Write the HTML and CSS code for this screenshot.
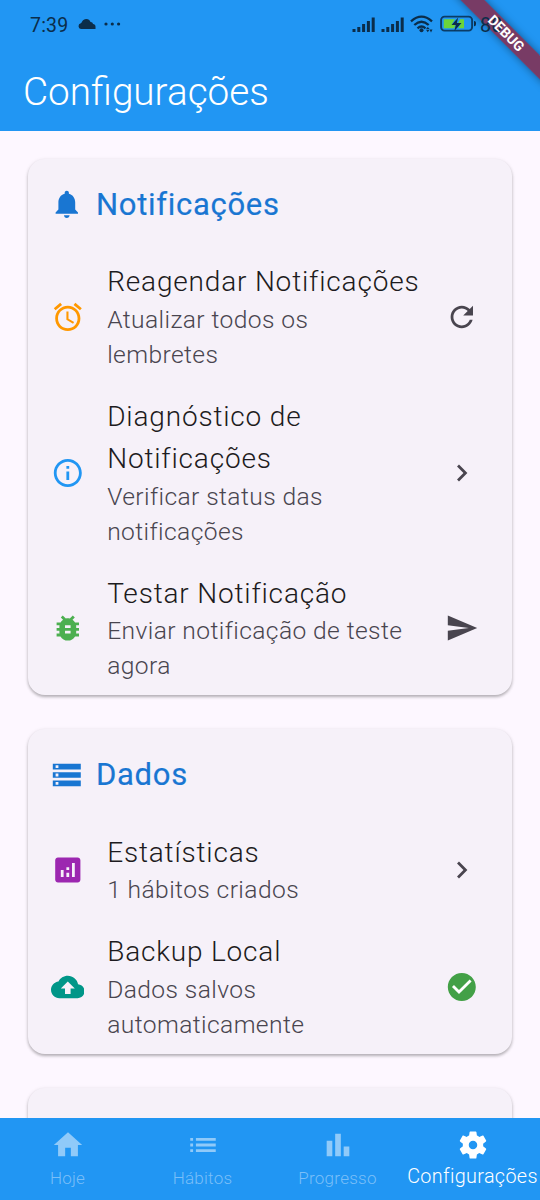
FILE: index.html
```html
<!DOCTYPE html>
<html lang="pt-BR">
<head>
<meta charset="utf-8">
<title>Configurações</title>
<link rel="stylesheet" href="styles.css">
</head>
<body>
<div class="app">
  <header class="appbar">
    <div class="debug ribbon"></div>
    <div class="status">
      <span class="clock">7:39</span>
      <svg class="cloud" width="18" height="10" viewBox="0 0 18 10"><path d="M3 10a2.900 2.900 0 0 1-.2-5.700C4 4 4.300 0 8.200 0c2.800 0 3.800 1.800 4.300 3 1.500 0 2.300.8 2.500 2 1.500 0 2.500 1 2.500 2.400V10z"/></svg>
      <svg class="dots" width="18" height="4" viewBox="0 0 18 4"><circle cx="2" cy="2" r="1.600"/><circle cx="8.300" cy="2" r="1.600"/><circle cx="14.600" cy="2" r="1.600"/></svg>
      <div class="indicators">
        <svg width="24" height="16" viewBox="0 0 24 16"><path d="M.5 13h3v3h-3zM5.300 11h3v5h-3zM10.100 8h3v8h-3zM14.900 5h3v11h-3zM19.700 1.500h3V16h-3z"/></svg>
        <svg width="24" height="16" viewBox="0 0 24 16"><path d="M.5 13h3v3h-3zM5.300 11h3v5h-3zM10.100 8h3v8h-3zM14.900 5h3v11h-3zM19.700 1.500h3V16h-3z"/></svg>
        <svg class="wifi" width="24" height="18" viewBox="0 0 24 18"><g fill="none" stroke="#0b2d4a" stroke-width="2.300"><path d="M1 6.300Q11.500-3 22 6.300"/><path d="M4.300 10Q11.500 3.500 18.700 10"/><path d="M7.500 13.300Q11.500 9.800 15.500 13.300"/></g><circle cx="11.500" cy="15.300" r="2"/><path d="M16 14l1.800-2 1.800 2zM16 14.800h3.500l-1.700 2.500zM19.500 14.500h3l-1.500 3z"/></svg>
        <svg class="battery" width="37" height="18" viewBox="0 0 37 18"><rect x="1.100" y="1.600" width="31" height="14" rx="3.500" fill="none" stroke="#0b3c66" stroke-width="1.900"/><path class="charge" d="M3.800 4.200H15L12 9h4l-2 4.200H3.800zM20 4.200h4v9h-6l3-5h-3z"/><path d="M18.200 2.500L11.500 10h4.300l-1.500 6L21.500 8h-4.700zM34 6c1.800 0 2 1 2 2.500S35.800 11.200 34 11.200z"/></svg>
        <span class="level">80</span>
      </div>
    </div>
    <h1 class="title">Configurações</h1>
    <div class="debug">DEBUG</div>
  </header>

  <main class="content">
    <section class="card">
      <h2 class="card-head blue"><svg class="icon" viewBox="0 0 24 24"><path d="M12 22c1.100 0 2-.9 2-2h-4c0 1.100.89 2 2 2zm6-6v-5c0-3.070-1.640-5.640-4.500-6.320V4c0-.83-.67-1.500-1.500-1.500s-1.500.67-1.500 1.500v.68C7.630 5.360 6 7.920 6 11v5l-2 2v1h16v-1l-2-2z"/></svg><span>Notificações</span></h2>
      <div class="row">
        <svg class="icon orange" viewBox="0 0 24 24"><path d="M22 5.720l-4.600-3.860-1.290 1.530 4.600 3.860L22 5.720zM7.880 3.390L6.600 1.860 2 5.710l1.290 1.530 4.590-3.850zM12.500 8H11v6l4.750 2.850.75-1.230-4-2.370V8zM12 4c-4.970 0-9 4.030-9 9s4.020 9 9 9c4.970 0 9-4.030 9-9s-4.030-9-9-9zm0 16c-3.870 0-7-3.130-7-7s3.130-7 7-7 7 3.130 7 7-3.130 7-7 7z"/></svg>
        <div class="text"><h3>Reagendar Notificações</h3><p>Atualizar todos os<br>lembretes</p></div>
        <svg class="icon grey" viewBox="0 0 24 24"><path d="M17.650 6.350C16.200 4.900 14.210 4 12 4c-4.420 0-7.990 3.580-7.990 8s3.570 8 7.990 8c3.730 0 6.840-2.550 7.730-6h-2.080c-.82 2.330-3.040 4-5.650 4-3.310 0-6-2.690-6-6s2.690-6 6-6c1.660 0 3.140.69 4.220 1.780L13 11h7V4l-2.350 2.350z"/></svg>
      </div>
      <div class="row">
        <svg class="icon info" viewBox="0 0 24 24"><path d="M11 7h2v2h-2zm0 4h2v6h-2zm1-9C6.480 2 2 6.480 2 12s4.480 10 10 10 10-4.480 10-10S17.520 2 12 2zm0 18c-4.410 0-8-3.590-8-8s3.590-8 8-8 8 3.590 8 8-3.590 8-8 8z"/></svg>
        <div class="text"><h3>Diagnóstico de<br>Notificações</h3><p>Verificar status das<br>notificações</p></div>
        <svg class="icon grey" viewBox="0 0 24 24"><path d="M10 6L8.590 7.410 13.170 12l-4.580 4.590L10 18l6-6z"/></svg>
      </div>
      <div class="row">
        <svg class="icon green" viewBox="0 0 24 24"><path d="M20 8h-2.810c-.45-.78-1.070-1.450-1.820-1.960L17 4.410 15.590 3l-2.170 2.170C12.960 5.060 12.490 5 12 5s-.96.06-1.410.17L8.410 3 7 4.410l1.620 1.630C7.880 6.550 7.260 7.220 6.810 8H4v2h2.090c-.05.33-.09.66-.09 1v1H4v2h2v1c0 .34.04.67.09 1H4v2h2.810c1.040 1.790 2.970 3 5.190 3s4.150-1.210 5.190-3H20v-2h-2.090c.05-.33.09-.66.09-1v-1h2v-2h-2v-1c0-.34-.04-.67-.09-1H20V8zm-6 8h-4v-2h4v2zm0-4h-4v-2h4v2z"/></svg>
        <div class="text"><h3>Testar Notificação</h3><p>Enviar notificação de teste<br>agora</p></div>
        <svg class="icon grey" viewBox="0 0 24 24"><path d="M2.010 21L23 12 2.010 3 2 10l15 2-15 2z"/></svg>
      </div>
    </section>

    <section class="card">
      <h2 class="card-head blue"><svg class="icon" viewBox="0 0 24 24"><path d="M2 20h20v-4H2v4zm2-3h2v2H4v-2zM2 4v4h20V4H2zm4 3H4V5h2v2zm-4 7h20v-4H2v4zm2-3h2v2H4v-2z"/></svg><span>Dados</span></h2>
      <div class="row">
        <svg class="icon purple" viewBox="0 0 24 24"><path d="M19 3H5c-1.100 0-2 .9-2 2v14c0 1.100.9 2 2 2h14c1.100 0 2-.9 2-2V5c0-1.100-.9-2-2-2zM9 17H7v-5h2v5zm4 0h-2v-3h2v3zm0-5h-2v-2h2v2zm4 5h-2V7h2v10z"/></svg>
        <div class="text"><h3>Estatísticas</h3><p>1 hábitos criados</p></div>
        <svg class="icon grey" viewBox="0 0 24 24"><path d="M10 6L8.590 7.410 13.170 12l-4.580 4.590L10 18l6-6z"/></svg>
      </div>
      <div class="row">
        <svg class="icon teal" viewBox="0 0 24 24"><path d="M19.350 10.040C18.670 6.590 15.640 4 12 4 9.110 4 6.600 5.640 5.350 8.040 2.340 8.360 0 10.910 0 14c0 3.310 2.690 6 6 6h13c2.760 0 5-2.240 5-5 0-2.640-2.050-4.780-4.650-4.960zM14 13v4h-4v-4H7l5-5 5 5h-3z"/></svg>
        <div class="text"><h3>Backup Local</h3><p>Dados salvos<br>automaticamente</p></div>
        <svg class="icon check" viewBox="0 0 24 24"><circle cx="12" cy="12" r="8" fill="#fff"/><path d="M12 2C6.480 2 2 6.480 2 12s4.480 10 10 10 10-4.480 10-10S17.520 2 12 2zm-2 15l-5-5 1.410-1.410L10 14.170l7.590-7.590L19 8l-9 9z"/></svg>
      </div>
    </section>

    <section class="card"><div class="card-head"></div></section>
  </main>

  <nav class="nav">
    <div class="tab"><svg class="icon" viewBox="0 0 24 24"><path d="M10 20v-6h4v6h5v-8h3L12 3 2 12h3v8z"/></svg><span>Hoje</span></div>
    <div class="tab"><svg class="icon" viewBox="0 0 24 24"><path d="M3 13h2v-2H3v2zm0 4h2v-2H3v2zm0-8h2V7H3v2zm4 4h14v-2H7v2zm0 4h14v-2H7v2zM7 7v2h14V7H7z"/></svg><span>Hábitos</span></div>
    <div class="tab"><svg class="icon" viewBox="0 0 24 24"><path d="M4 9h4v11H4zm12 4h4v7h-4zm-6-9h4v16h-4z"/></svg><span>Progresso</span></div>
    <div class="tab active"><svg class="icon" viewBox="0 0 24 24"><path d="M19.140 12.940c.04-.3.060-.61.060-.94 0-.32-.02-.64-.07-.94l2.030-1.580c.18-.14.23-.41.12-.61l-1.920-3.320c-.12-.22-.37-.29-.59-.22l-2.390.96c-.5-.38-1.030-.7-1.620-.94l-.36-2.540c-.04-.24-.24-.41-.48-.41h-3.840c-.24 0-.43.17-.47.41l-.36 2.540c-.59.24-1.130.57-1.620.94l-2.390-.96c-.22-.08-.47 0-.59.22L2.740 8.870c-.12.21-.08.47.12.61l2.030 1.580c-.05.3-.09.63-.09.94s.02.64.07.94l-2.030 1.580c-.18.14-.23.41-.12.61l1.920 3.320c.12.22.37.29.59.22l2.390-.96c.5.38 1.030.7 1.620.94l.36 2.540c.05.24.24.41.48.41h3.840c.24 0 .44-.17.47-.41l.36-2.540c.59-.24 1.130-.56 1.620-.94l2.390.96c.22.08.47 0 .59-.22l1.920-3.320c.12-.22.07-.47-.12-.61l-2.010-1.580zM12 15c-1.650 0-3-1.350-3-3s1.350-3 3-3 3 1.350 3 3-1.350 3-3 3z"/></svg><span>Configurações</span></div>
  </nav>
</div>
</body>
</html>
```
FILE: styles.css
```css
* { box-sizing: border-box; margin: 0; padding: 0; }
body { font-family: Roboto, sans-serif; font-weight: 300; background: #fdf7ff; }
svg { display: block; flex: none; }
.app { width: 540px; height: 1200px; display: flex; flex-direction: column; overflow: hidden; }

.appbar { position: relative; height: 130.500px; flex: none; background: #2196f3; overflow: hidden; }
.status { position: relative; display: flex; align-items: center; height: 48px; padding-left: 30px; fill: #0b2d4a; color: #0b2d4a; }
.clock { width: 47.500px; font-size: 19.500px; font-weight: 400; line-height: 24px; padding-top: 3px; letter-spacing: .2px; }
.dots { margin-left: 8px; }
.indicators { display: flex; align-items: center; margin-left: auto; width: 188px; }
.indicators svg { margin-right: 5px; }
.indicators .wifi { margin-right: 6px; }
.indicators .battery { margin-right: 3px; }
.charge { fill: #6bd53a; }
.level { font-size: 19.500px; font-weight: 400; line-height: 24px; padding-top: 3px; letter-spacing: .2px; }
.title { padding-left: 23px; margin-top: 19.500px; font-size: 38.700px; font-weight: 300; line-height: 48px; color: #fff; }
.debug { position: absolute; left: 441px; top: 24.500px; width: 130px; height: 17px; transform: rotate(45deg); text-align: center; font-size: 14px; font-weight: 700; line-height: 17px; color: #fff; }
.ribbon { background: rgba(158, 20, 40, .7); box-shadow: 0 0 8px rgba(0, 0, 0, .4); }

.content { flex: 1; min-height: 0; overflow: hidden; padding: 28.300px 28px 0; }
.card { margin-bottom: 34px; border-radius: 17px; background: #f6f1f9; box-shadow: 0 2px 3px rgba(0, 0, 0, .24), 0 1px 4px rgba(0, 0, 0, .1); }
.card-head { display: flex; align-items: center; gap: 12px; height: 91px; padding-left: 22.400px; font-size: 31px; font-weight: 400; line-height: 40px; letter-spacing: .7px; }
.card-head span { padding-top: 1px; -webkit-text-stroke: .2px currentColor; }
.icon { width: 34px; height: 34px; fill: currentColor; }
.row { display: flex; align-items: center; padding: 11px 33.500px 11px 22.500px; }
.row .icon, .card-head .icon { width: 33.600px; }
.text { flex: 1; margin-left: 23.100px; white-space: nowrap; }
.text h3 { padding-top: .5px; font-size: 28px; font-weight: 300; line-height: 42.500px; letter-spacing: .82px; color: #1d1b20; }
.text p { margin-top: -2px; padding-bottom: 1.400px; font-size: 24.600px; line-height: 35px; letter-spacing: .4px; color: #49454f; }
.blue { color: #1976d2; }
.orange { color: #ff9800; }
.info { color: #2196f3; }
.green { color: #4caf50; }
.purple { color: #9c27b0; }
.teal { color: #009688; }
.check { color: #43a047; }
.grey { color: #49454f; }

.nav { display: flex; flex: none; height: 82px; background: #2196f3; }
.tab { width: 135px; padding-top: 10px; display: flex; flex-direction: column; align-items: center; color: #90caf9; }
.tab .icon { width: 34px; height: 34px; }
.tab span { margin-top: 6px; font-size: 17px; line-height: 20px; letter-spacing: .25px; white-space: nowrap; color: #7abff8; }
.tab.active { color: #fff; }
.tab.active span { margin-top: 3px; font-size: 19.800px; line-height: 24px; letter-spacing: .35px; color: #fff; }
```
